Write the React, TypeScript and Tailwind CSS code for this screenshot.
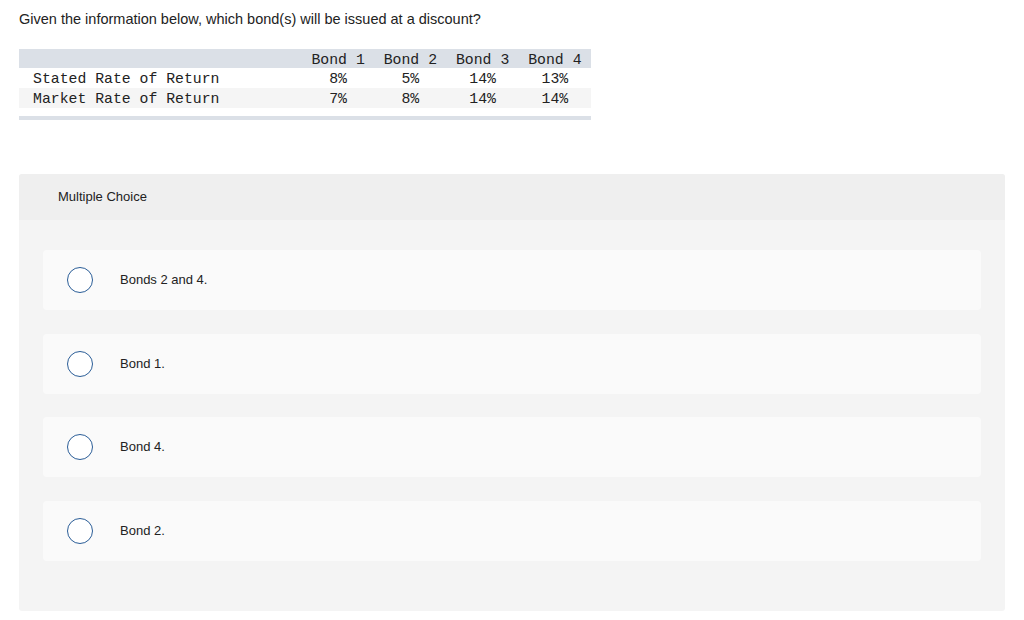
import React from "react";

const bonds = ["Bond 1", "Bond 2", "Bond 3", "Bond 4"];
const rows = [
  { label: "Stated Rate of Return", values: ["8%", "5%", "14%", "13%"], bg: "bg-white" },
  { label: "Market Rate of Return", values: ["7%", "8%", "14%", "14%"], bg: "bg-[#f5f5f5]" },
];
const options = ["Bonds 2 and 4.", "Bond 1.", "Bond 4.", "Bond 2."];

export default function App() {
  return (
    <div className="w-[1024px] h-[620px] bg-white text-[#333] overflow-hidden" style={{ fontFamily: "'Liberation Sans', Arial, sans-serif" }}>
      <div className="pl-[19px] pt-[10px]">
        <p className="text-[14.5px] leading-[18px] text-[#222]">Given the information below, which bond(s) will be issued at a discount?</p>
        <div className="mt-[21px] w-[572px] text-[14.8px] text-[#222]" style={{ fontFamily: "'Liberation Mono', 'Courier New', monospace" }}>
          <div className="flex h-[19px] items-center bg-[#dbe0e7] pt-[3px]">
            <div className="w-[283px]" />
            {bonds.map((b) => (
              <div key={b} className="w-[72.25px] text-center whitespace-pre">{b}</div>
            ))}
          </div>
          {rows.map((r) => (
            <div key={r.label} className={`flex h-[20px] items-center pt-[3px] ${r.bg}`}>
              <div className="w-[283px] pl-[14px] whitespace-pre">{r.label}</div>
              {r.values.map((v, i) => (
                <div key={i} className="w-[72.25px] text-center">{v}</div>
              ))}
            </div>
          ))}
          <div className="h-[8px]" />
          <div className="h-[4px] bg-[#dbe0e7]" />
        </div>
      </div>
      <div className="ml-[19px] mt-[54px] w-[986px] rounded-[3px] bg-[#f4f4f4] pb-[50px]">
        <div className="h-[46px] flex items-center pl-[39px] bg-[#efefef] rounded-t-[3px] text-[13px] text-[#222]">Multiple Choice</div>
        <div className="flex flex-col gap-[23.5px] pt-[30px] px-[24px]">
          {options.map((o) => (
            <div key={o} className="h-[60px] rounded-[4px] bg-[#fafafa] flex items-center pl-[24px]">
              <div className="w-[26px] h-[26px] rounded-full border-[1.5px] border-[#2a5d97] bg-white shrink-0" />
              <div className="ml-[27px] text-[13px] text-[#222]">{o}</div>
            </div>
          ))}
        </div>
      </div>
    </div>
  );
}
